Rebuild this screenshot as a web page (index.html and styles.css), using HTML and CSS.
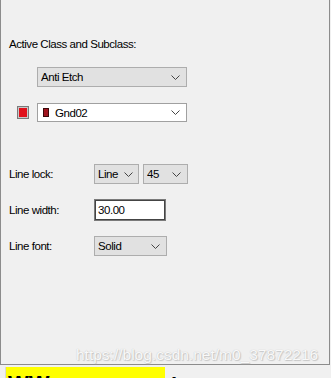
FILE: index.html
```html
<!DOCTYPE html>
<html lang="en">
<head>
    <meta charset="UTF-8">
    <title>Options</title>
    <link rel="stylesheet" href="styles.css">
</head>
<body>
    <div class="panel">
        <div class="heading">Active Class and Subclass:</div>

        <div class="row indent">
            <div class="combo flat wide">
                <span class="value">Anti Etch</span>
                <svg class="chev" width="9" height="5" viewBox="0 0 9 5"><path d="M0.5 0.5 L4.5 4.5 L8.5 0.5" fill="none" stroke="#444" stroke-width="1"/></svg>
            </div>
        </div>

        <div class="row">
            <span class="swatch"></span>
            <div class="combo white wide">
                <span class="chip"></span>
                <span class="value">Gnd02</span>
                <svg class="chev" width="9" height="5" viewBox="0 0 9 5"><path d="M0.5 0.5 L4.5 4.5 L8.5 0.5" fill="none" stroke="#444" stroke-width="1"/></svg>
            </div>
        </div>

        <div class="fields">
            <div class="field">
                <label>Line lock:</label>
                <div class="combo flat small">
                    <span class="value cut">Line</span>
                    <svg class="chev" width="9" height="5" viewBox="0 0 9 5"><path d="M0.5 0.5 L4.5 4.5 L8.5 0.5" fill="none" stroke="#444" stroke-width="1"/></svg>
                </div>
                <div class="combo flat small">
                    <span class="value">45</span>
                    <svg class="chev" width="9" height="5" viewBox="0 0 9 5"><path d="M0.5 0.5 L4.5 4.5 L8.5 0.5" fill="none" stroke="#444" stroke-width="1"/></svg>
                </div>
            </div>
            <div class="field">
                <label>Line width:</label>
                <div class="textbox">30.00</div>
            </div>
            <div class="field">
                <label>Line font:</label>
                <div class="combo flat medium">
                    <span class="value">Solid</span>
                    <svg class="chev" width="9" height="5" viewBox="0 0 9 5"><path d="M0.5 0.5 L4.5 4.5 L8.5 0.5" fill="none" stroke="#444" stroke-width="1"/></svg>
                </div>
            </div>
        </div>

        <div class="watermark">https://blog.csdn.net/m0_37872216</div>
    </div>

    <div class="status">
        <div class="highlight">WW</div>
        <span class="mark">l</span>
    </div>
</body>
</html>
```

FILE: styles.css
```css
body {
    margin: 0;
    background-color: #f0f0f0;
    font-family: "Liberation Sans", Arial, sans-serif;
    font-size: 11.5px;
    letter-spacing: -0.45px;
    color: #000;
    width: 331px;
    height: 378px;
    overflow: hidden;
}

.panel {
    position: relative;
    box-sizing: border-box;
    width: 330px;
    height: 365px;
    border: 1px solid #8c8c8c;
    border-top: none;
    padding: 37px 0 0 8px;
}

.heading {
    height: 14px;
    line-height: 14px;
}

.row {
    display: flex;
    align-items: center;
    gap: 8px;
    padding-left: 8px;
}

.indent {
    margin-top: 16px;
    padding-left: 28px;
}

.row + .row {
    margin-top: 16px;
}

.swatch {
    box-sizing: border-box;
    width: 12px;
    height: 13px;
    border: 1px solid #7a7a7a;
    background-color: #e0101a;
    box-shadow: inset 0 0 0 1px #c8c8c8;
}

.combo {
    box-sizing: border-box;
    display: flex;
    align-items: center;
    height: 20px;
    padding: 0 6px 0 3px;
    border: 1px solid #adadad;
}

.flat {
    background-color: #e1e1e1;
}

.white {
    height: 19px;
    background-color: #fff;
    border-color: #a0a0a0;
}

.wide {
    width: 150px;
}

.small {
    width: 45px;
}

.medium {
    width: 73px;
}

.value {
    flex: 1;
    min-width: 0;
    white-space: nowrap;
    overflow: hidden;
}

.cut {
    flex: none;
    width: 21px;
    margin-right: 5px;
}

.chev {
    flex: none;
}

.chip {
    box-sizing: border-box;
    width: 6px;
    height: 9px;
    margin: 0 6px 0 2px;
    background-color: #a0141e;
    border: 1px solid #3a0a0a;
}

.fields {
    margin-top: 41px;
    display: flex;
    flex-direction: column;
    gap: 14px;
}

.field {
    display: flex;
    align-items: center;
    gap: 4px;
    height: 22px;
}

.field label {
    width: 81px;
    flex: none;
}

.textbox {
    box-sizing: border-box;
    width: 72px;
    height: 22px;
    padding: 2px 3px;
    border: 1px solid #7a7a7a;
    box-shadow: inset 0 0 0 1px #444, inset 0 0 0 2px #fff;
    background-color: #fff;
    line-height: 16px;
}

.watermark {
    position: absolute;
    left: 75px;
    bottom: 0;
    font-size: 15.5px;
    line-height: 19px;
    letter-spacing: 0;
    color: rgba(255, 255, 255, 0.92);
    text-shadow: 0 0 1px #b8b8b8, 1px 1px 1px #c8c8c8;
    white-space: nowrap;
}

.status {
    display: flex;
    align-items: flex-start;
    height: 13px;
    padding: 2px 0 0 3px;
    overflow: hidden;
}

.highlight {
    box-sizing: border-box;
    width: 160px;
    height: 30px;
    margin-left: 2px;
    padding: 6px 0 0 2px;
    background-color: #ffff00;
    border-left: 1px solid #d8d8d8;
    font-size: 22px;
    font-weight: bold;
    line-height: 22px;
    letter-spacing: 0;
}

.mark {
    margin: 8px 0 0 6px;
    font-size: 22px;
    font-weight: bold;
    line-height: 22px;
}
```
